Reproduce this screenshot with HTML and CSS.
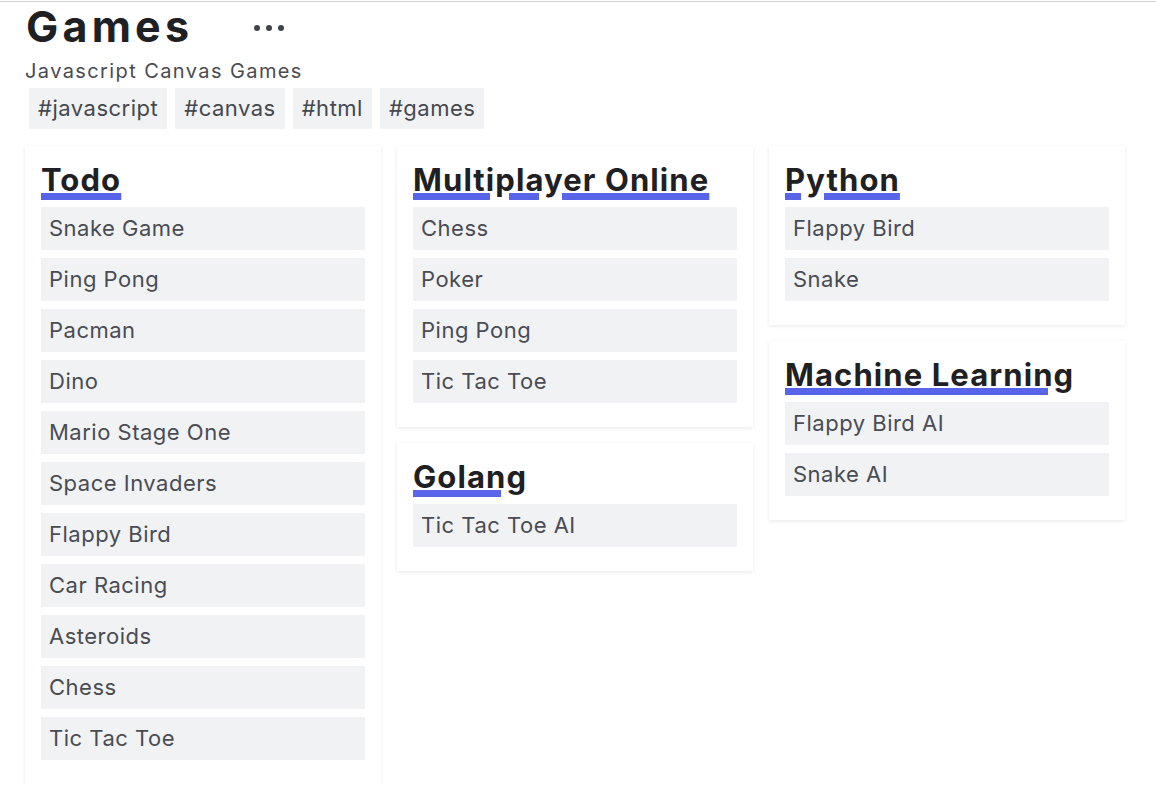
FILE: index.html
```html
<!DOCTYPE html>
<html lang="en">
<head>
<meta charset="utf-8">
<title>Games</title>
<link rel="stylesheet" href="styles.css">
</head>
<body>
<div class="page">
  <header class="header">
    <div class="title-row">
      <h1 class="title">Games</h1>
      <button class="more" aria-label="More options">
        <span class="dot"></span><span class="dot"></span><span class="dot"></span>
      </button>
    </div>
    <p class="subtitle">Javascript Canvas Games</p>
    <div class="tags">
      <span class="tag">#javascript</span>
      <span class="tag">#canvas</span>
      <span class="tag">#html</span>
      <span class="tag">#games</span>
    </div>
  </header>

  <main class="board">
    <div class="column">
      <section class="card">
        <h2 class="card-title">Todo</h2>
        <ul class="items">
          <li class="item">Snake Game</li>
          <li class="item">Ping Pong</li>
          <li class="item">Pacman</li>
          <li class="item">Dino</li>
          <li class="item">Mario Stage One</li>
          <li class="item">Space Invaders</li>
          <li class="item">Flappy Bird</li>
          <li class="item">Car Racing</li>
          <li class="item">Asteroids</li>
          <li class="item">Chess</li>
          <li class="item">Tic Tac Toe</li>
        </ul>
      </section>
    </div>
    <div class="column">
      <section class="card">
        <h2 class="card-title">Multiplayer Online</h2>
        <ul class="items">
          <li class="item">Chess</li>
          <li class="item">Poker</li>
          <li class="item">Ping Pong</li>
          <li class="item">Tic Tac Toe</li>
        </ul>
      </section>
      <section class="card">
        <h2 class="card-title">Golang</h2>
        <ul class="items">
          <li class="item">Tic Tac Toe AI</li>
        </ul>
      </section>
    </div>
    <div class="column">
      <section class="card">
        <h2 class="card-title">Python</h2>
        <ul class="items">
          <li class="item">Flappy Bird</li>
          <li class="item">Snake</li>
        </ul>
      </section>
      <section class="card">
        <h2 class="card-title">Machine Learning</h2>
        <ul class="items">
          <li class="item">Flappy Bird AI</li>
          <li class="item">Snake AI</li>
        </ul>
      </section>
    </div>
  </main>
</div>
</body>
</html>
```
FILE: styles.css
```css
html {
  padding-top: 1px;
  background: #ffffff;
}
body {
  margin: 0;
  border-top: 1px solid #d4d4d4;
  font-family: Inter, "Noto Sans", sans-serif;
  color: #202124;
  background: #ffffff;
}
.page {
  padding: 0 25px;
}
.header {
  display: flex;
  flex-direction: column;
}
.title-row {
  display: flex;
  align-items: center;
  gap: 61px;
  height: 48px;
}
.title {
  margin: 0 0 0 1px;
  font-size: 43px;
  line-height: 48px;
  font-weight: 700;
  letter-spacing: 4.2px;
  color: #1f2023;
}
.more {
  display: flex;
  gap: 6px;
  padding: 0;
  border: 0;
  background: none;
  margin-top: 4px;
}
.dot {
  width: 6px;
  height: 6px;
  border-radius: 50%;
  background: #40434a;
}
.subtitle {
  margin: 9px 0 0;
  font-size: 20px;
  line-height: 24px;
  letter-spacing: 1.4px;
  color: #494b51;
}
.tags {
  display: flex;
  gap: 8px;
  margin: 5px 0 0 4px;
}
.tag {
  height: 41px;
  line-height: 41px;
  padding: 0 9px;
  font-size: 22px;
  letter-spacing: 0.5px;
  background: #f1f2f4;
  color: #45484e;
}
.board {
  display: flex;
  align-items: flex-start;
  gap: 16px;
  margin-top: 17px;
}
.column {
  width: 356px;
  display: flex;
  flex-direction: column;
  gap: 16px;
}
.card {
  background: #ffffff;
  padding: 16px 16px 16px;
  box-shadow: 0 1px 4px rgba(0, 0, 0, 0.09);
}
.card-title {
  margin: 0 0 9px;
  font-size: 31px;
  line-height: 36px;
  font-weight: 700;
  letter-spacing: 1.1px;
  color: #1f2023;
  text-decoration: underline;
  text-decoration-color: #5865e8;
  text-decoration-thickness: 7px;
  text-underline-offset: 2px;
  text-decoration-skip-ink: auto;
}
.items {
  list-style: none;
  margin: 0;
  padding: 0;
  display: flex;
  flex-direction: column;
  gap: 8px;
  padding-bottom: 8px;
}
.item {
  height: 43px;
  line-height: 43px;
  padding: 0 8px;
  font-size: 22px;
  letter-spacing: 0.5px;
  background: #f1f2f4;
  color: #494c53;
}
```
